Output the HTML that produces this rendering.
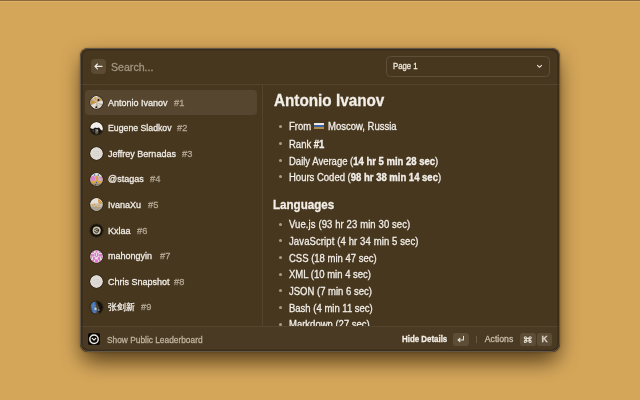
<!DOCTYPE html>
<html><head><meta charset="utf-8">
<style>
*{margin:0;padding:0;box-sizing:border-box}
html,body{width:640px;height:400px;overflow:hidden}
body{background:#d4a65a;font-family:"Liberation Sans",sans-serif;position:relative;color:#ede8e0}
.topline{position:absolute;left:0;top:0;width:640px;height:1px;background:#8a6a3a}
.topline2{position:absolute;left:0;top:1px;width:640px;height:1px;background:#e0b264}
.win{position:absolute;left:80px;top:48px;width:480px;height:304px;background:#47371f;border-radius:8px;
  box-shadow:0 8px 20px 0 rgba(40,25,5,0.45), 0 16px 20px -8px rgba(40,25,5,0.46), 0 0 3px rgba(40,25,5,0.3);overflow:hidden;will-change:transform}
.win:after{content:"";position:absolute;left:0;top:0;right:0;bottom:0;border:1px solid #5f5647;border-radius:8px;pointer-events:none;box-shadow:inset 0 0 0 1.6px rgba(25,15,0,0.28)}
.win div{-webkit-text-stroke:0.28px currentColor}
.win b{-webkit-text-stroke:0.35px currentColor}
.abs{position:absolute;white-space:nowrap}
.sep-h{position:absolute;left:0;width:480px;height:1px;background:#54442e}
.sep-v{position:absolute;top:37px;left:182px;width:1px;height:242px;background:#54442e}
.back{position:absolute;left:10.5px;top:11px;width:15px;height:15px;border-radius:4px;background:#5c4b33}
.search{left:31px;top:11.8px;font-size:10.6px;color:#a39682;line-height:14px}
.dd{position:absolute;left:306px;top:8px;width:164px;height:20.5px;border:1px solid #5f4f39;border-radius:4.5px}
.dd span{position:absolute;left:6px;top:4px;font-size:8.6px;transform:scaleX(0.9);transform-origin:0 0;color:#efe9df;line-height:11px}
.sel{position:absolute;left:5px;top:41.7px;width:172.3px;height:25px;border-radius:4px;background:#56462f}
.item{position:absolute;left:28px;font-size:9.2px;line-height:12px;transform:scaleX(0.98);transform-origin:0 0;color:#f2eee8}
.num{position:absolute;font-size:9.8px;line-height:12px;transform:scaleX(0.95);transform-origin:0 0;color:#b3a794}
.av{position:absolute;left:10px;width:13px;height:13px;border-radius:50%;box-shadow:0 0 0.5px 0.6px rgba(20,14,6,0.55)}
.h1{left:193.5px;top:44.3px;font-size:16px;transform:scaleX(0.955);transform-origin:0 0;font-weight:bold;line-height:18px;color:#f3efe8}
.li{position:absolute;left:209px;font-size:10px;line-height:12px;transform:scaleX(0.95);transform-origin:0 0;color:#f2eee8;white-space:nowrap}
.dot{position:absolute;left:198.9px;width:3px;height:3px;border-radius:50%;background:#a89c88}
.h2{left:193.5px;font-size:12.6px;transform:scaleX(0.92);transform-origin:0 0;font-weight:bold;line-height:14px;color:#f3efe8}
.flag{position:absolute;left:234px;top:74.7px;width:10.2px;height:6.8px;border-radius:0.5px;background:linear-gradient(#eeeae4 0,#eeeae4 40%,#3a62a8 40%,#3a62a8 70%,#b08a48 70%)}
.footer{position:absolute;left:0;top:279px;width:480px;height:25px;background:#4a3a23}
.ft{font-size:8.2px;line-height:10px;color:#b3a690}
.key{position:absolute;top:284.5px;height:13px;border-radius:3px;background:#5e4d36;color:#d8cfc0;font-size:8px;text-align:center;line-height:13px}
</style></head><body>
<div class="topline"></div><div class="topline2"></div>
<div class="win">
  <div class="back"><svg width="15" height="15" viewBox="0 0 15 15"><path d="M4 7.4H11M6.4 5L4 7.4L6.4 9.8" stroke="#f2eee6" stroke-width="1.15" fill="none" stroke-linecap="round" stroke-linejoin="round"/></svg></div>
  <div class="abs search">Search...</div>
  <div class="dd"><span>Page 1</span><svg style="position:absolute;left:149px;top:7px" width="7" height="5" viewBox="0 0 7 5"><path d="M1.5 1.4L3.5 3.3L5.5 1.4" stroke="#eee8de" stroke-width="1.05" fill="none" stroke-linecap="round" stroke-linejoin="round"/></svg></div>
  <div class="sep-h" style="top:36px"></div>
  <div class="sep-v"></div>
  <div class="sel"></div>

  <!-- list items -->
  <div class="item" style="top:48.5px">Antonio Ivanov</div><div class="num" style="left:94px;top:48.5px">#1</div>
  <div class="item" style="top:74.1px;transform:scaleX(0.95)">Eugene Sladkov</div><div class="num" style="left:97px;top:74.1px">#2</div>
  <div class="item" style="top:99.7px">Jeffrey Bernadas</div><div class="num" style="left:101.5px;top:99.7px">#3</div>
  <div class="item" style="top:125.3px">@stagas</div><div class="num" style="left:70px;top:125.3px">#4</div>
  <div class="item" style="top:150.9px">IvanaXu</div><div class="num" style="left:67.5px;top:150.9px">#5</div>
  <div class="item" style="top:176.5px">Kxlaa</div><div class="num" style="left:57px;top:176.5px">#6</div>
  <div class="item" style="top:202.1px">mahongyin</div><div class="num" style="left:79.5px;top:202.1px">#7</div>
  <div class="item" style="top:227.7px">Chris Snapshot</div><div class="num" style="left:94px;top:227.7px">#8</div>
  <div class="item" style="top:253.3px">张剑新</div><div class="num" style="left:61px;top:253.3px">#9</div>

  <!-- avatars -->
  <svg class="av" style="top:48px" viewBox="0 0 13 13"><defs><clipPath id="c"><circle cx="6.5" cy="6.5" r="6.5"/></clipPath></defs><g clip-path="url(#c)">
   <rect width="13" height="13" fill="#bdb5a8"/>
   <path d="M6.5 6.5L2 0L7.5 0Z" fill="#ece8e2"/>
   <path d="M6.5 6.5L0 3L1 9Z" fill="#c9913a"/>
   <path d="M6.5 6.5L3.5 1.5L6.8 1.2Z" fill="#d09a44"/>
   <path d="M6.5 6.5L13 4.5L13 8Z" fill="#e6e2dc"/>
   <path d="M6.5 6.5L9.5 1.5L12 3.5Z" fill="#c8913c"/>
   <path d="M6.5 6.5L10 9.5L7.5 10.5Z" fill="#c48c36"/>
   <path d="M6.5 6.5L1 9.5L5 13Z" fill="#e2ded6"/>
   <path d="M6.5 6.5L9 13L12 10Z" fill="#d6d0c6"/>
   <circle cx="8.4" cy="3.9" r="1" fill="#1c1812"/>
   <circle cx="6.3" cy="11.2" r="0.9" fill="#1c1812"/>
  </g></svg>
  <svg class="av" style="top:73.6px" viewBox="0 0 13 13"><defs><clipPath id="c2"><circle cx="6.5" cy="6.5" r="6.5"/></clipPath></defs><g clip-path="url(#c2)">
   <rect width="13" height="13" fill="#191510"/>
   <path d="M0 0H13V9L11 8L9 5.5L7 6L5 5.5L3 7L0 6Z" fill="#f2efea"/>
   <path d="M5 7L8 7L8.5 11L6.5 12.5L5 11Z" fill="#5e574a"/>
   <path d="M6.5 7.5L7.8 7.5L7.8 9.5L6.5 9.5Z" fill="#b0a898"/>
   <path d="M2.5 8L4 7.5L4.2 10L2.8 10Z" fill="#4a4438"/>
  </g></svg>
  <svg class="av" style="top:99.2px" viewBox="0 0 13 13"><circle cx="6.5" cy="6.5" r="6.5" fill="#dedad5"/><g fill="#cfcac4"><circle cx="4.5" cy="4.5" r=".6"/><circle cx="6.5" cy="4.5" r=".6"/><circle cx="8.5" cy="4.5" r=".6"/><circle cx="4.5" cy="6.5" r=".6"/><circle cx="6.5" cy="6.5" r=".6"/><circle cx="8.5" cy="6.5" r=".6"/><circle cx="4.5" cy="8.5" r=".6"/><circle cx="6.5" cy="8.5" r=".6"/><circle cx="8.5" cy="8.5" r=".6"/></g></svg>
  <svg class="av" style="top:124.8px" viewBox="0 0 13 13"><defs><clipPath id="c4"><circle cx="6.5" cy="6.5" r="6.5"/></clipPath></defs><g clip-path="url(#c4)">
   <rect width="13" height="13" fill="#cfc6b4"/>
   <rect y="0" width="13" height="3" fill="#e6e2da"/>
   <path d="M0.5 4L3 2.8L5.2 4L5.2 7.8L0.5 7.8Z" fill="#de80d0"/>
   <path d="M8.5 4.5L11.5 3.5L12.5 5L12.5 7.8L8.5 7.8Z" fill="#de80d0"/>
   <rect x="5.5" y="2.5" width="2.5" height="7" fill="#d9a344"/>
   <path d="M9 5.5L11.5 5L11 7.5L9 8Z" fill="#c8bfae"/>
   <rect y="8" width="13" height="2.5" fill="#d8a444"/>
   <rect y="10.5" width="13" height="3" fill="#8a8070"/>
   <circle cx="4.5" cy="2" r=".8" fill="#3a5ea0"/><circle cx="8.5" cy="2" r=".8" fill="#3a5ea0"/>
   <circle cx="6.5" cy="9.5" r=".7" fill="#3a5ea0"/>
   <circle cx="5.5" cy="12" r=".6" fill="#1a1612"/>
  </g></svg>
  <svg class="av" style="top:150.4px" viewBox="0 0 13 13"><defs><clipPath id="c5"><circle cx="6.5" cy="6.5" r="6.5"/></clipPath></defs><g clip-path="url(#c5)">
   <rect width="13" height="13" fill="#c4beb4"/>
   <path d="M0 0H13V5L0 6Z" fill="#e2ded8"/>
   <path d="M8 1.5L9 1L12.5 5L11 6L8.5 5.5Z" fill="#d49a3c"/>
   <rect y="9" width="13" height="4" fill="#a8a298"/>
   <circle cx="2.5" cy="7" r=".8" fill="#d49a3c"/><circle cx="4.5" cy="6.3" r=".8" fill="#d49a3c"/><circle cx="3.2" cy="8.8" r=".7" fill="#d49a3c"/><circle cx="6" cy="8.7" r=".9" fill="#d49a3c"/><circle cx="9" cy="8" r=".8" fill="#d49a3c"/><circle cx="11.8" cy="9.5" r=".6" fill="#d49a3c"/><circle cx="7" cy="12" r=".6" fill="#d49a3c"/>
  </g></svg>
  <svg class="av" style="top:176px" viewBox="0 0 13 13"><circle cx="6.5" cy="6.5" r="6.5" fill="#14110d"/><circle cx="6.7" cy="6.5" r="4" fill="#c8bea8"/><path d="M4.5 5.5Q6.5 3.8 8.5 5.5Q9 8 6.7 8.8Q4.8 8.5 4.6 6.8" fill="none" stroke="#2a241c" stroke-width="1"/><circle cx="6.9" cy="6.6" r=".8" fill="#2a241c"/></svg>
  <svg class="av" style="top:201.6px" viewBox="0 0 13 13"><defs><clipPath id="c7"><circle cx="6.5" cy="6.5" r="6.5"/></clipPath></defs><g clip-path="url(#c7)">
   <rect width="13" height="13" fill="#e4dcd8"/>
   <g fill="#e078d4"><rect x="2" y="1" width="2" height="2"/><rect x="5.5" y="0" width="2" height="2.5"/><rect x="9" y="1" width="2" height="2"/><rect x="1" y="4" width="3" height="2.5"/><rect x="4.5" y="3" width="1.5" height="3"/><rect x="7" y="3" width="1.5" height="3"/><rect x="9" y="4" width="3" height="2.5"/><rect x="0" y="6.5" width="2" height="2"/><rect x="11" y="6.5" width="2" height="2"/><rect x="3" y="7" width="2" height="3"/><rect x="8" y="7" width="2" height="3"/><rect x="1" y="10" width="3" height="2"/><rect x="5" y="9.5" width="3" height="3.5"/><rect x="9" y="10" width="3" height="2"/><rect x="5.5" y="6" width="2" height="1"/></g>
  </g></svg>
  <svg class="av" style="top:227.2px" viewBox="0 0 13 13"><circle cx="6.5" cy="6.5" r="6.5" fill="#dedad5"/><g fill="#cfcac4"><circle cx="4.5" cy="5" r=".6"/><circle cx="6.5" cy="4.3" r=".6"/><circle cx="8.5" cy="4.3" r=".6"/><circle cx="4.5" cy="7" r=".6"/><circle cx="7.5" cy="6.3" r=".6"/><circle cx="9.5" cy="6.3" r=".6"/><circle cx="4.5" cy="9" r=".6"/><circle cx="6.5" cy="8.3" r=".6"/><circle cx="8.5" cy="8.3" r=".6"/></g></svg>
  <svg class="av" style="top:252.8px" viewBox="0 0 13 13"><defs><clipPath id="c9"><circle cx="6.5" cy="6.5" r="6.5"/></clipPath></defs><g clip-path="url(#c9)">
   <rect width="13" height="13" fill="#4a4234"/>
   <path d="M1.5 1L5 1L6 4.5L5.5 7L7 8L6.5 11L5 12.5L3 12L2 9L1 5Z" fill="#4a78c0"/>
   <path d="M6 0H13V13H9L8 9L9.5 7L8 4Z" fill="#15120e"/>
   <rect x="4.5" y="6.5" width="2" height="2.5" fill="#d8ccb0"/>
   <circle cx="3.2" cy="4.5" r=".7" fill="#a08860"/>
   <rect x="8" y="8" width="1.5" height="2" fill="#8a8070"/>
  </g></svg>
  <!-- detail -->
  <div class="abs h1">Antonio Ivanov</div>
  <div class="dot" style="top:77.1px"></div><div class="li" style="top:73.4px">From</div><div class="flag"></div><div class="li" style="left:247.5px;top:73.4px">Moscow, Russia</div>
  <div class="dot" style="top:94.1px"></div><div class="li" style="top:90.9px">Rank <b>#1</b></div>
  <div class="dot" style="top:110.6px"></div><div class="li" style="top:107.6px">Daily Average (<b>14 hr 5 min 28 sec</b>)</div>
  <div class="dot" style="top:127.1px"></div><div class="li" style="top:124.2px">Hours Coded (<b>98 hr 38 min 14 sec</b>)</div>
  <div class="abs h2" style="top:150px;left:192.8px">Languages</div>
  <div class="dot" style="top:174.6px"></div><div class="li" style="top:171.4px;letter-spacing:0.11px">Vue.js (93 hr 23 min 30 sec)</div>
  <div class="dot" style="top:191.2px"></div><div class="li" style="top:188px;letter-spacing:0.12px">JavaScript (4 hr 34 min 5 sec)</div>
  <div class="dot" style="top:207.9px"></div><div class="li" style="top:204.7px">CSS (18 min 47 sec)</div>
  <div class="dot" style="top:224.6px"></div><div class="li" style="top:221.3px">XML (10 min 4 sec)</div>
  <div class="dot" style="top:241.2px"></div><div class="li" style="top:237.9px">JSON (7 min 6 sec)</div>
  <div class="dot" style="top:257.9px"></div><div class="li" style="top:254.6px">Bash (4 min 11 sec)</div>
  <div class="dot" style="top:274.6px"></div><div class="li" style="top:271.2px">Markdown (27 sec)</div>

  <div class="footer"></div>
  <div class="sep-h" style="top:278px"></div>
  <svg class="abs" style="left:8px;top:285px" width="12" height="12" viewBox="0 0 12 12"><rect width="12" height="12" rx="2" fill="#0c0a08"/><circle cx="6" cy="6.25" r="4.2" stroke="#f0ebe2" stroke-width="1.4" fill="none"/><path d="M4.3 5.4L6 7.1L7.7 5.4" stroke="#ece6dc" stroke-width="1.2" fill="none" stroke-linecap="round" stroke-linejoin="round"/></svg>
  <div class="abs ft" style="left:27px;top:286.6px;font-size:8.35px;color:#beb29e">Show Public Leaderboard</div>
  <div class="abs ft" style="left:321.5px;top:287px;font-weight:bold;color:#f2ede5;transform:scaleX(0.965);transform-origin:0 0">Hide Details</div>
  <div class="key" style="left:373px;width:15.5px"><svg style="position:absolute;left:0;top:0" width="15.5" height="13" viewBox="0 0 15.5 13"><path d="M10.5 3.3V7H5.3M6.9 5.4L5.1 7L6.9 8.6" stroke="#e8e1d4" stroke-width="1.05" fill="none" stroke-linecap="round" stroke-linejoin="round"/></svg></div>
  <div class="abs" style="left:396px;top:287.5px;width:1px;height:7px;background:#6a5a44"></div>
  <div class="abs ft" style="left:404.8px;top:286.3px;font-size:8.7px;color:#cabfac">Actions</div>
  <div class="key" style="left:440px;width:15.5px"><svg style="position:absolute;left:0;top:0" width="15.5" height="13" viewBox="0 0 15.5 13"><path transform="translate(7.75 6.65) scale(0.88) translate(-7.75 -6.65)" d="M6.2 5.2H9.3V8.1H6.2Z M6.2 5.2V4.6A1.2 1.2 0 1 0 5 5.8H6.2 M9.3 5.2V4.6A1.2 1.2 0 1 1 10.5 5.8H9.3 M6.2 8.1V8.7A1.2 1.2 0 1 1 5 7.5H6.2 M9.3 8.1V8.7A1.2 1.2 0 1 0 10.5 7.5H9.3" stroke="#e6dfd2" stroke-width="1.2" fill="none"/></svg></div>
  <div class="key" style="left:457px;width:15px;font-size:8.5px;font-weight:bold">K</div>
</div>
</body></html>
